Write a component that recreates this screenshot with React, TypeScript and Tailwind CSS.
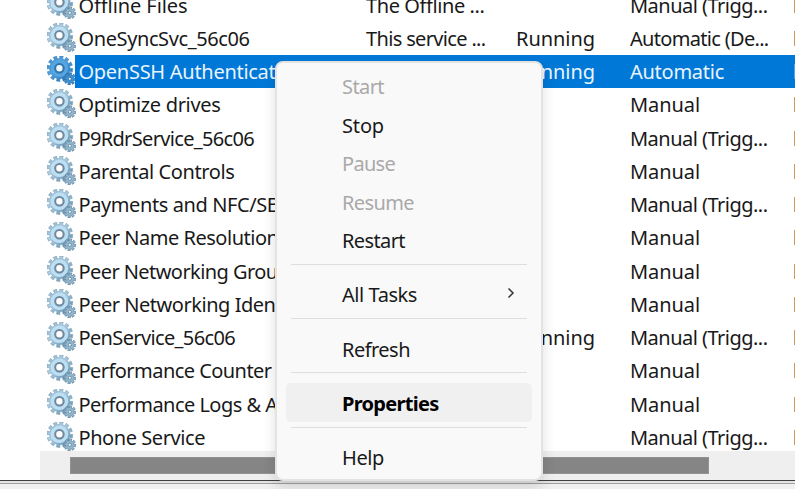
import React, { useLayoutEffect, useRef } from 'react';

type FitProps = { text: string; w: number; className?: string };

// A label whose tracking is adjusted so that it takes up the given width.
function Fit({ text, w, className = '' }: FitProps) {
  const ref = useRef<HTMLSpanElement>(null);
  useLayoutEffect(() => {
    const el = ref.current;
    if (!el) return;
    el.style.letterSpacing = '0px';
    const natural = el.getBoundingClientRect().width;
    el.style.letterSpacing = `${(w - natural) / text.length}px`;
  }, [text, w]);
  return (
    <span ref={ref} className={`inline-block whitespace-pre ${className}`}>
      {text}
    </span>
  );
}

function cog(cx: number, cy: number, outer: number, inner: number, teeth: number) {
  const pts: string[] = [];
  const step = (Math.PI * 2) / teeth;
  for (let i = 0; i < teeth; i++) {
    const a = i * step - Math.PI / 2 + 0.13;
    [
      [-0.27, inner],
      [-0.27, outer],
      [0.27, outer],
      [0.27, inner],
    ].forEach(([o, r]) => {
      pts.push(`${(cx + Math.cos(a + o * step) * r).toFixed(2)},${(cy + Math.sin(a + o * step) * r).toFixed(2)}`);
    });
  }
  return pts.join(' ');
}

const BIG = cog(12.8, 12.6, 13, 10.2, 12);
const SMALL = cog(22.8, 22.8, 6.1, 4.2, 8);

function Gears({ selected }: { selected?: boolean }) {
  const edge = selected ? '#3480bd' : '#7696ae';
  const id = selected ? 'gear-on' : 'gear-off';
  return (
    <svg viewBox="0 0 29 29" className="h-[29px] w-[29px] shrink-0">
      <defs>
        <linearGradient id={id} x1="0" y1="0" x2="1" y2="1">
          <stop offset="0" stopColor={selected ? '#3a88c8' : '#8fb0c8'} />
          <stop offset="0.4" stopColor={selected ? '#4f9fdb' : '#adcfe4'} />
          <stop offset="1" stopColor={selected ? '#2170b3' : '#4f7f9f'} />
        </linearGradient>
      </defs>
      <polygon points={BIG} fill={`url(#${id})`} stroke={edge} strokeWidth="0.5" />
      <circle cx="12.4" cy="12.2" r="7" fill="none" stroke={selected ? '#55a5e0' : '#bcdff3'} strokeWidth="3.6" />
      <circle
        cx="12.4"
        cy="12.2"
        r="4.2"
        fill={selected ? '#f0f7fc' : '#fff'}
        stroke={selected ? '#2f76b0' : '#71899e'}
        strokeWidth="2"
      />
      <polygon points={SMALL} fill={selected ? '#4190cf' : '#92b7cf'} stroke={selected ? '#2468a3' : '#5d819c'} strokeWidth="0.7" />
      <circle cx="22.8" cy="22.8" r="1.6" fill="#edf5fa" stroke={selected ? '#2468a3' : '#5d819c'} strokeWidth="0.8" />
    </svg>
  );
}

type Service = {
  name: string;
  w: number;
  desc?: string;
  dw?: number;
  running?: boolean;
  type: string;
  tw: number;
  selected?: boolean;
};

const T = 'Manual (Trigg...';
const services: Service[] = [
  { name: 'Offline Files', w: 109, desc: 'The Offline ...', dw: 118.5, type: T, tw: 137.5 },
  { name: 'OneSyncSvc_56c06', w: 171, desc: 'This service ...', dw: 119.5, running: true, type: 'Automatic (De...', tw: 138.5 },
  { name: 'OpenSSH Authenticat', w: 197, running: true, type: 'Automatic', tw: 94, selected: true },
  { name: 'Optimize drives', w: 142, type: 'Manual', tw: 70 },
  { name: 'P9RdrService_56c06', w: 175.5, type: T, tw: 137.5 },
  { name: 'Parental Controls', w: 156, type: 'Manual', tw: 70 },
  { name: 'Payments and NFC/SE', w: 199, type: T, tw: 137.5 },
  { name: 'Peer Name Resolution', w: 200, type: 'Manual', tw: 70 },
  { name: 'Peer Networking Grou', w: 199, type: 'Manual', tw: 70 },
  { name: 'Peer Networking Iden', w: 197, type: 'Manual', tw: 70 },
  { name: 'PenService_56c06', w: 156.5, running: true, type: T, tw: 137.5 },
  { name: 'Performance Counter', w: 193, type: 'Manual', tw: 70 },
  { name: 'Performance Logs & A', w: 199, type: 'Manual', tw: 70 },
  { name: 'Phone Service', w: 126.5, type: T, tw: 137.5 },
];

function Row({ s }: { s: Service }) {
  return (
    <div className="flex h-[33.25px] shrink-0">
      <div className="w-[28px] shrink-0 pt-[1.5px]">
        <Gears selected={s.selected} />
      </div>
      <div
        className={`flex h-full flex-1 items-center overflow-hidden pt-[1px] pl-[3.5px] leading-[33px] ${
          s.selected ? 'bg-[#0078d7] text-[#eaf4fc]' : 'text-[#191919]'
        }`}
      >
        <div className="w-[287.5px] shrink-0"><Fit text={s.name} w={s.w} /></div>
        <div className="w-[150px] shrink-0">{s.desc && <Fit text={s.desc} w={s.dw ?? 0} />}</div>
        <div className="w-[114px] shrink-0">{s.running && <Fit text="Running" w={79} />}</div>
        <div className="w-[163.5px] shrink-0"><Fit text={s.type} w={s.tw} /></div>
        <div className={`h-[15px] w-[2px] shrink-0 ${s.selected ? 'bg-[#4fa9ee]' : 'bg-[#cf9a5b]'}`} />
      </div>
    </div>
  );
}

type ItemProps = { text: string; w: number; disabled?: boolean; active?: boolean; sub?: boolean };

function Item({ text, w, disabled, active, sub }: ItemProps) {
  return (
    <div
      className={`mx-[9px] flex h-[38.5px] items-center justify-between rounded-[5px] pt-[3px] pr-[17px] pl-[56px] ${
        active ? 'bg-[#f0f0f0] font-bold text-black' : disabled ? 'text-[#a9a9a9]' : 'text-[#191919]'
      }`}
    >
      <Fit text={text} w={w} />
      {sub && (
        <svg viewBox="0 0 8 12" className="mb-[5px] h-[12px] w-[8px]" fill="none" stroke="#333" strokeWidth="1.5">
          <path d="M1.5 1.5 6 6 1.5 10.5" />
        </svg>
      )}
    </div>
  );
}

function Separator() {
  return (
    <div className="mx-[14px] h-[15.7px] pt-[5px]">
      <div className="h-px bg-[#dedede]" />
    </div>
  );
}

export default function App() {
  return (
    <div className="relative flex h-[489px] w-[795px] flex-col overflow-hidden bg-white font-['Noto_Sans',sans-serif] text-[20px]">
      <div className="h-[451px] shrink-0 overflow-hidden pl-[47px]">
        <div className="-mt-[12px] flex flex-col">
          {services.map((s) => (
            <Row key={s.name} s={s} />
          ))}
        </div>
      </div>
      <div className="ml-[40px] h-[29px] shrink-0 bg-[#efefef] pt-[6px] pl-[30px]">
        <div className="h-[17px] w-[639px] border border-[#929292] bg-[#858585]" />
      </div>
      <div className="h-px shrink-0 bg-[#404040]" />
      <div className="h-[2px] shrink-0 bg-[#e5e5e5]" />
      <div className="h-px shrink-0 bg-[#a0a0a0]" />
      <div className="flex-1 bg-[#f0f0f0]" />

      <div className="absolute top-[61px] left-[275px] h-[420px] w-[268px] rounded-[8px] border-2 border-[#e3e3e3] bg-[#f9f9f9] pt-[3.5px] shadow-[0_6px_14px_rgba(0,0,0,0.13)]">
        <Item text="Start" w={42} disabled />
        <Item text="Stop" w={42} />
        <Item text="Pause" w={53} disabled />
        <Item text="Resume" w={72} disabled />
        <Item text="Restart" w={63} />
        <Separator />
        <Item text="All Tasks" w={75} sub />
        <Separator />
        <Item text="Refresh" w={68} />
        <Separator />
        <Item text="Properties" w={96.5} active />
        <Separator />
        <Item text="Help" w={42} />
      </div>
    </div>
  );
}
